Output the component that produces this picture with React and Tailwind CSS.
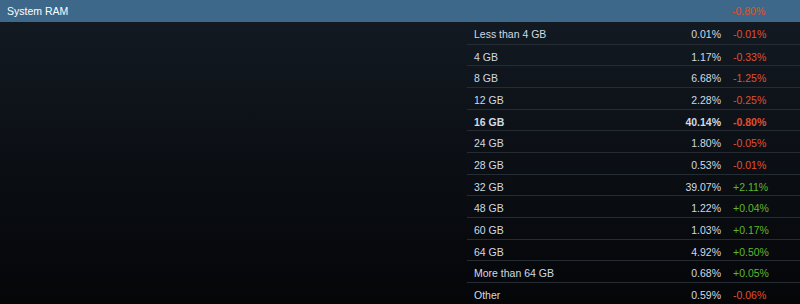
import React from "react";

const rows = [
  ["Less than 4 GB", "0.01%", "-0.01%"],
  ["4 GB", "1.17%", "-0.33%"],
  ["8 GB", "6.68%", "-1.25%"],
  ["12 GB", "2.28%", "-0.25%"],
  ["16 GB", "40.14%", "-0.80%", true],
  ["24 GB", "1.80%", "-0.05%"],
  ["28 GB", "0.53%", "-0.01%"],
  ["32 GB", "39.07%", "+2.11%"],
  ["48 GB", "1.22%", "+0.04%"],
  ["60 GB", "1.03%", "+0.17%"],
  ["64 GB", "4.92%", "+0.50%"],
  ["More than 64 GB", "0.68%", "+0.05%"],
  ["Other", "0.59%", "-0.06%"],
];

export default function App() {
  return (
    <div
      className="w-[800px] h-[304px] overflow-hidden bg-gradient-to-b from-[#141b24] to-[#050608] text-[10.5px] flex flex-col"
      style={{ fontFamily: '"Liberation Sans", Arial, sans-serif' }}
    >
      <div className="h-[22px] shrink-0 bg-[#3d6889] flex items-center pt-[2px] text-white">
        <div className="flex-1 pl-[7px] text-[10.5px]">System RAM</div>
        <div className="w-[68px] text-[#e0502d]">-0.80%</div>
      </div>
      <div className="flex flex-1">
        <div className="flex-1" />
        <div className="w-[333px] flex flex-col">
          {rows.map(([label, pct, chg, bold], i) => (
            <div
              key={label}
              className={`h-[21.67px] shrink-0 flex items-center pt-[5px] ${
                i > 0 ? "border-t border-[#262c34]" : ""
              } ${bold ? "font-bold" : ""}`}
            >
              <div className="flex-1 pl-[7px] text-[#d0dbe4]">{label}</div>
              <div className="w-[60px] text-right text-[#d0dbe4]">{pct}</div>
              <div
                className={`w-[79px] pl-[12px] ${
                  chg.startsWith("+") ? "text-[#5fb82c]" : "text-[#e0502d]"
                }`}
              >
                {chg}
              </div>
            </div>
          ))}
        </div>
      </div>
    </div>
  );
}
